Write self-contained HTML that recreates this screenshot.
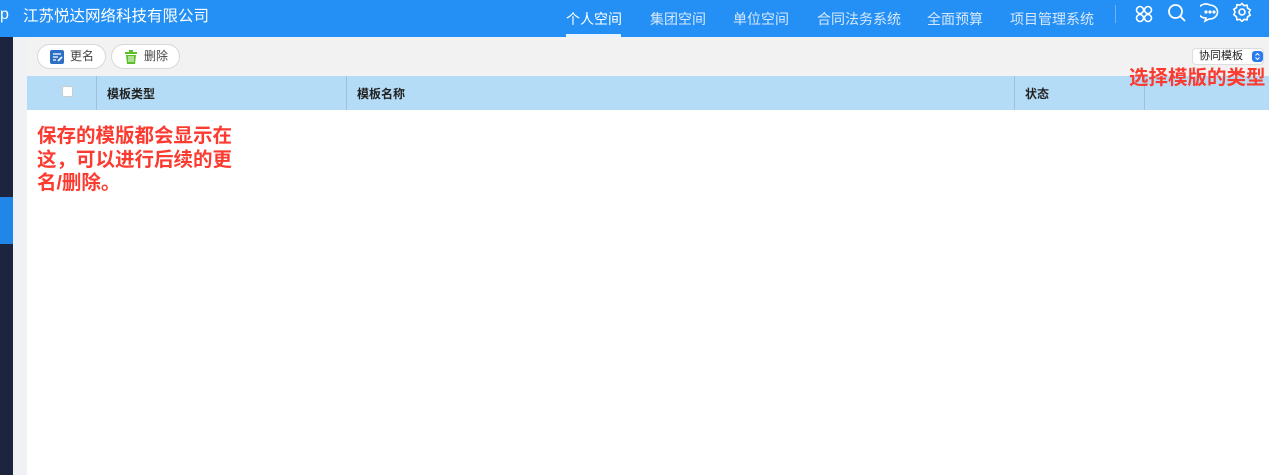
<!DOCTYPE html>
<html><head><meta charset="utf-8"><style>
*{margin:0;padding:0;box-sizing:border-box}
body{width:1269px;height:475px;overflow:hidden;position:relative;background:#fff;font-family:"Liberation Sans","Noto Sans CJK SC",sans-serif}
.hdr{position:absolute;left:0;top:0;width:1269px;height:37px;background:#2490f5;color:#fff}
.abs{position:absolute}
.nav{position:absolute;top:9px;font-size:14px;color:#d6e8fd}
.side{position:absolute;left:0;top:37px;width:13px;height:438px;background:#1c253d}
.gut{position:absolute;left:13px;top:37px;width:14px;height:438px;background:#eff1f4}
.tb{position:absolute;left:27px;top:37px;width:1242px;height:39px;background:#f2f2f2}
.btn{position:absolute;top:44px;height:25px;border:1px solid #d8d8d8;border-radius:13px;background:#fff;font-size:12px;color:#444;line-height:23px}
.th{position:absolute;left:27px;top:76px;width:1242px;height:34px;background:#b4dcf7;font-size:12px;font-weight:bold;color:#222}
.th span{position:absolute;top:9px}
.sep{position:absolute;top:0;width:1px;height:34px;background:#9fbfdc}
.red{position:absolute;color:#fb3a30;font-size:19.5px;font-weight:bold;line-height:23.5px;white-space:nowrap}
</style></head><body>
<div class="hdr">
<div class="abs" style="left:0;top:6px;font-size:16px">p</div>
<div class="abs" style="left:23px;top:4px;font-size:15.5px">江苏悦达网络科技有限公司</div>
<div class="nav" style="left:566px;color:#fff">个人空间</div>
<div class="abs" style="left:566px;top:34px;width:55px;height:3px;background:#e8f2fd"></div>
<div class="nav" style="left:650px">集团空间</div>
<div class="nav" style="left:733px">单位空间</div>
<div class="nav" style="left:817px">合同法务系统</div>
<div class="nav" style="left:927px">全面预算</div>
<div class="nav" style="left:1010px">项目管理系统</div>
<div class="abs" style="left:1115px;top:5px;width:1px;height:18px;background:#6fb2f8"></div>
<svg class="abs" style="left:1133px;top:3px" width="22" height="22" viewBox="0 0 22 22" fill="none" stroke="#fff" stroke-width="1.6"><circle cx="7" cy="7" r="3.5"/><circle cx="15" cy="7" r="3.5"/><circle cx="7" cy="15" r="3.5"/><circle cx="15" cy="15" r="3.5"/></svg>
<svg class="abs" style="left:1167px;top:3px" width="20" height="20" viewBox="0 0 20 20" fill="none" stroke="#fff" stroke-width="1.8"><circle cx="8.5" cy="8.5" r="6.5"/><path d="M13.5 13.5L18 18"/></svg>
<svg class="abs" style="left:1200px;top:3px" width="20" height="20" viewBox="0 0 20 20" fill="none" stroke="#fff" stroke-width="1.6"><path d="M10 2a8 7 0 1 0 -4 13l-1 3 4-2a8 7 0 0 0 1-14z"/><circle cx="6" cy="9" r=".8" fill="#fff"/><circle cx="10" cy="9" r=".8" fill="#fff"/><circle cx="14" cy="9" r=".8" fill="#fff"/></svg>
<svg class="abs" style="left:1232px;top:2px" width="20" height="20" viewBox="0 0 20 20" fill="none" stroke="#fff" stroke-width="1.6"><circle cx="10" cy="10" r="3"/><path d="M10 1.5l2 2.2 3-.5.6 3 2.6 1.6-1.3 2.7 1.3 2.7-2.6 1.6-.6 3-3-.5-2 2.2-2-2.2-3 .5-.6-3L1.8 12.7 3.1 10 1.8 7.3 4.4 5.7l.6-3 3 .5z"/></svg>
</div>
<div class="side"><div class="abs" style="left:0;top:160px;width:13px;height:47px;background:#2087e8"></div></div>
<div class="gut"></div>
<div class="tb"></div>
<div class="btn" style="left:37px;width:69px"><svg class="abs" style="left:12px;top:5px" width="14" height="14" viewBox="0 0 14 14"><rect width="14" height="14" rx="2" fill="#2d6fc4"/><path d="M3 4h8M3 7h5M3 10h3" stroke="#fff" stroke-width="1.3"/><path d="M8 11l4-4" stroke="#fff" stroke-width="1.6"/></svg><span class="abs" style="left:32px">更名</span></div>
<div class="btn" style="left:111px;width:69px"><svg class="abs" style="left:12px;top:5px" width="14" height="14" viewBox="0 0 14 14" fill="#5bbf2a"><rect x="1" y="2" width="12" height="2"/><rect x="5" y="0" width="4" height="2"/><path d="M2 5h10l-1 9H3z"/><path d="M5 6v6M7 6v6M9 6v6" stroke="#fff" stroke-width="1"/></svg><span class="abs" style="left:32px">删除</span></div>
<div class="abs" style="left:1192px;top:48px;width:72px;height:17px;background:#fff;border-radius:4px;border:1px solid #ddd;font-size:11px;line-height:15px;padding-left:6px;color:#222">协同模板<svg class="abs" style="left:59px;top:2px" width="11" height="11" viewBox="0 0 11 11"><rect width="11" height="11" rx="3" fill="#2a7af0"/><path d="M3.5 4.5l2-2 2 2M3.5 6.5l2 2 2-2" stroke="#fff" stroke-width="1" fill="none"/></svg></div>
<div class="th">
<div class="abs" style="left:35px;top:10px;width:11px;height:11px;background:#fff;border-radius:2px;border:1px solid #ccc"></div>
<div class="sep" style="left:69px"></div><span style="left:80px">模板类型</span>
<div class="sep" style="left:319px"></div><span style="left:330px">模板名称</span>
<div class="sep" style="left:987px"></div><span style="left:998px">状态</span>
<div class="sep" style="left:1117px"></div>
</div>
<div class="red" style="left:1129px;top:67px">选择模版的类型</div>
<div class="red" style="left:37px;top:125px">保存的模版都会显示在<br>这，可以进行后续的更<br>名/删除。</div>
</body></html>
